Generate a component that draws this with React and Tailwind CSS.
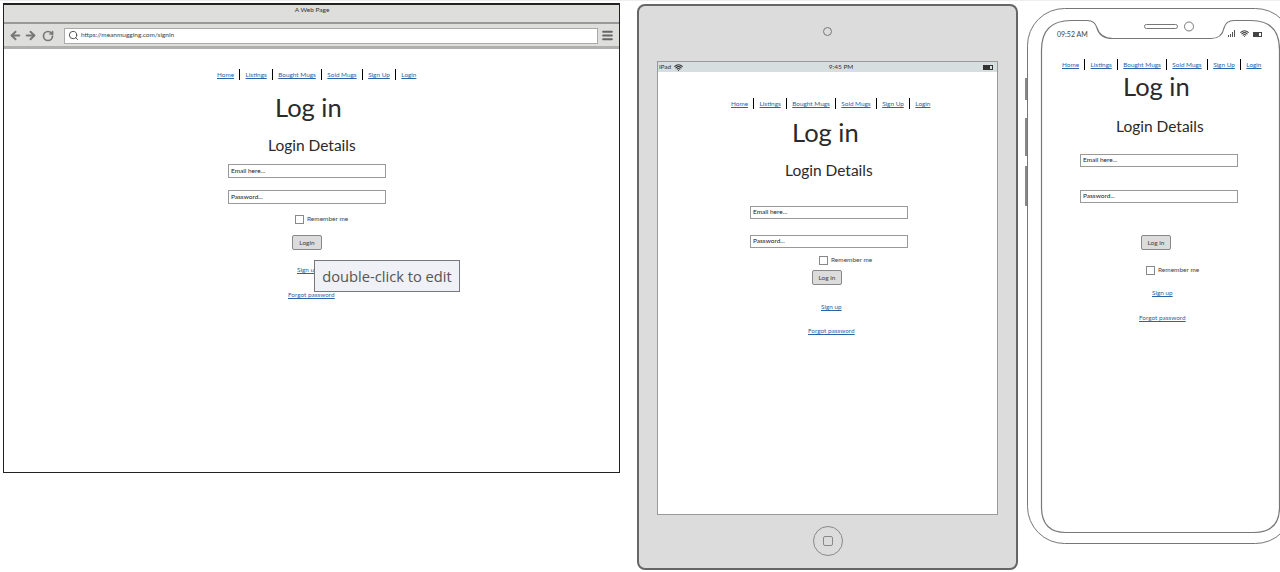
import React from "react";
import { ArrowLeft, ArrowRight, RotateCw, Search, Menu, Wifi } from "lucide-react";

const font = { fontFamily: "Lato, 'Noto Sans', sans-serif" };

function A({ children, className = "" }) {
  return <a className={`text-[#2a64a8] underline text-[6.4px] leading-[9px] whitespace-nowrap ${className}`}>{children}</a>;
}

function Nav({ className = "" }) {
  const items = ["Home", "Listings", "Bought Mugs", "Sold Mugs", "Sign Up", "Login"];
  return (
    <div className={`flex items-center h-[11px] ${className}`}>
      {items.map((t, i) => (
        <React.Fragment key={t}>
          {i > 0 && <span className="w-px h-[11px] bg-black mx-[5.25px]" />}
          <A>{t}</A>
        </React.Fragment>
      ))}
    </div>
  );
}

function Field({ children, className = "" }) {
  return (
    <div className={`w-[158px] border border-[#999] text-[#222] text-[6.5px] leading-none px-[2px] flex items-center bg-white ${className}`}>
      {children}
    </div>
  );
}

function Remember({ className = "" }) {
  return (
    <div className={`flex items-center gap-[3px] ${className}`}>
      <span className="w-[9px] h-[9px] border border-[#888] bg-white" />
      <span className="text-[#444] text-[6.5px] leading-none whitespace-nowrap">Remember me</span>
    </div>
  );
}

function Btn({ children, className = "" }) {
  return (
    <div className={`w-[30px] h-[15px] rounded-[2px] border border-[#888] bg-[#dcdcdc] text-[#444] text-[6.5px] flex items-center justify-center ${className}`}>
      {children}
    </div>
  );
}

function Browser() {
  return (
    <div className="absolute left-[3px] top-[3px] w-[617px] h-[470px] border border-[#222] border-t-2 bg-white flex flex-col">
      <div className="h-[19px] bg-[#dededc] border-b-2 border-[#999] shrink-0 flex justify-center text-[#333] text-[6.5px] leading-[9px]">
        <span className="ml-[1px]">A Web Page</span>
      </div>
      <div className="h-[25px] bg-[#dededc] border-b-[3px] border-[#b0b0ae] shrink-0 flex items-center pl-[5px] pr-[5px] pt-px">
        <ArrowLeft size={13} strokeWidth={3.6} color="#777" />
        <ArrowRight size={13} strokeWidth={3.6} color="#777" className="ml-[2px]" />
        <RotateCw size={12} strokeWidth={3.4} color="#777" className="ml-[5px]" />
        <div className="ml-[10px] flex-1 h-[16px] border border-[#aaa] bg-white flex items-center pl-[3px] gap-[2px]">
          <Search size={11} strokeWidth={2} color="#444" />
          <span className="text-[#444] text-[6.5px] leading-none">https://meanmugging.com/signin</span>
        </div>
        <Menu size={13} strokeWidth={3.8} color="#666" className="ml-[3px]" />
      </div>
      <div className="relative flex-1">
        <Nav className="ml-[213px] mt-[20px]" />
        <h1 className="ml-[271px] mt-[12px] text-[25.5px] leading-[30px] text-[#2a2a2a]">Log in</h1>
        <h2 className="ml-[264px] mt-[13px] text-[15.5px] leading-[20px] text-[#2a2a2a] whitespace-nowrap">Login Details</h2>
        <Field className="ml-[224px] mt-[9px] h-[14px]">Email here...</Field>
        <Field className="ml-[224px] mt-[12px] h-[14px]">Password...</Field>
        <Remember className="ml-[291px] mt-[11px]" />
        <Btn className="ml-[288px] mt-[11px]">Login</Btn>
        <div className="ml-[293px] mt-[15px] h-[9px] flex"><A>Sign up</A></div>
        <div className="ml-[284px] mt-[16px] h-[9px] flex"><A>Forgot password</A></div>
        <div className="absolute left-[310px] top-[211px] w-[146px] h-[32px] bg-[#eff1f7] border border-[#777] text-[#555] text-[14.7px] flex items-center justify-center whitespace-nowrap" style={{ fontFamily: "'Open Sans', sans-serif" }}>
          double-click to edit
        </div>
      </div>
    </div>
  );
}

function Ipad() {
  return (
    <div className="absolute left-[637px] top-[4px] w-[381px] h-[566px] rounded-[8px] border-2 border-[#666] bg-[#dcdcdc] flex flex-col items-center">
      <div className="w-[9px] h-[9px] rounded-full border border-[#777] mt-[21px] shrink-0" />
      <div className="w-[341px] h-[454px] mt-[25px] border border-[#999] bg-white shrink-0 flex flex-col">
        <div className="h-[10px] bg-[#d6dee0] flex items-center justify-between px-[1px] text-[#333] text-[6.5px] leading-none shrink-0">
          <span className="flex items-center gap-[3px]">iPad <Wifi size={9} strokeWidth={3} color="#333" /></span>
          <span className="ml-[16px]">9:45 PM</span>
          <span className="w-[10px] h-[5px] border border-[#333] mr-[3px] flex"><span className="w-[6px] bg-[#333]" /></span>
        </div>
        <Nav className="ml-[73px] mt-[26px]" />
        <h1 className="ml-[134px] mt-[8px] text-[25.5px] leading-[30px] text-[#2a2a2a]">Log in</h1>
        <h2 className="ml-[127px] mt-[13px] text-[15.5px] leading-[20px] text-[#2a2a2a] whitespace-nowrap">Login Details</h2>
        <Field className="ml-[92px] mt-[26px] h-[13px]">Email here...</Field>
        <Field className="ml-[92px] mt-[16px] h-[13px]">Password...</Field>
        <Remember className="ml-[161px] mt-[8px]" />
        <Btn className="ml-[154px] mt-[5px]">Log in</Btn>
        <div className="ml-[163px] mt-[17px] h-[9px] flex"><A>Sign up</A></div>
        <div className="ml-[150px] mt-[15px] h-[9px] flex"><A>Forgot password</A></div>
      </div>
      <div className="w-[30px] h-[30px] rounded-full border border-[#888] mt-[11px] flex items-center justify-center shrink-0">
        <span className="w-[10px] h-[10px] rounded-[2px] border border-[#888]" />
      </div>
    </div>
  );
}

function PhoneFrame() {
  return (
    <svg className="absolute left-0 top-0" width="280" height="572" fill="none" stroke="#777">
      <rect x="2.5" y="8.5" width="265" height="535" rx="37" />
      <path strokeWidth="1.2" d="M16.5 50 Q16.5 20.5 46 20.5 H62 Q70 20.5 72 28 Q75 38.5 88 38.5 H186 Q197 38.5 199 28 Q201 20.5 209 20.5 H226 Q254.5 20.5 254.5 50 V507 Q254.5 532.5 229 532.5 H41 Q16.5 532.5 16.5 507 Z" />
      <rect x="119.5" y="24.5" width="33" height="4" rx="2" />
      <circle cx="164" cy="26.5" r="4.5" />
      <g stroke="none" fill="#888">
        <rect x="0" y="78" width="2" height="22" />
        <rect x="0" y="118" width="2" height="38" />
        <rect x="0" y="166" width="2" height="40" />
      </g>
      <g stroke="none" fill="#555">
        <rect x="203" y="35" width="1" height="2" />
        <rect x="205" y="34" width="1" height="3" />
        <rect x="207" y="32" width="1" height="5" />
        <rect x="209" y="30" width="1" height="7" />
      </g>
      <rect x="228.5" y="32.5" width="8" height="4" stroke="#444" />
      <rect x="229" y="33" width="5" height="3" fill="#444" stroke="none" />
    </svg>
  );
}

function Iphone() {
  return (
    <div className="absolute left-[1025px] top-0 w-[255px] h-[572px] overflow-hidden">
      <PhoneFrame />
      <div className="relative flex flex-col">
        <div className="absolute left-[32px] top-[30px] flex w-[40px] text-[#444] text-[7px] leading-[9px] whitespace-nowrap">09:52 AM</div>
        <Wifi className="absolute left-[215px] top-[29px]" size={9} strokeWidth={3} color="#444" />
        <Nav className="ml-[37px] mt-[59px]" />
        <h1 className="ml-[98px] mt-px text-[25.5px] leading-[30px] text-[#2a2a2a]">Log in</h1>
        <h2 className="ml-[91px] mt-[15px] text-[15.5px] leading-[20px] text-[#2a2a2a] whitespace-nowrap">Login Details</h2>
        <Field className="ml-[55px] mt-[18px] h-[13px]">Email here...</Field>
        <Field className="ml-[55px] mt-[23px] h-[13px]">Password...</Field>
        <Btn className="ml-[116px] mt-[32px]">Log in</Btn>
        <Remember className="ml-[121px] mt-[16px]" />
        <div className="ml-[127px] mt-[13px] h-[9px] flex"><A>Sign up</A></div>
        <div className="ml-[114px] mt-[16px] h-[9px] flex"><A>Forgot password</A></div>
      </div>
    </div>
  );
}

export default function App() {
  return (
    <div className="relative w-[1280px] h-[572px] overflow-hidden bg-white" style={font}>
      <div className="h-px bg-[#eeeeee]" />
      <Browser />
      <Ipad />
      <Iphone />
    </div>
  );
}
